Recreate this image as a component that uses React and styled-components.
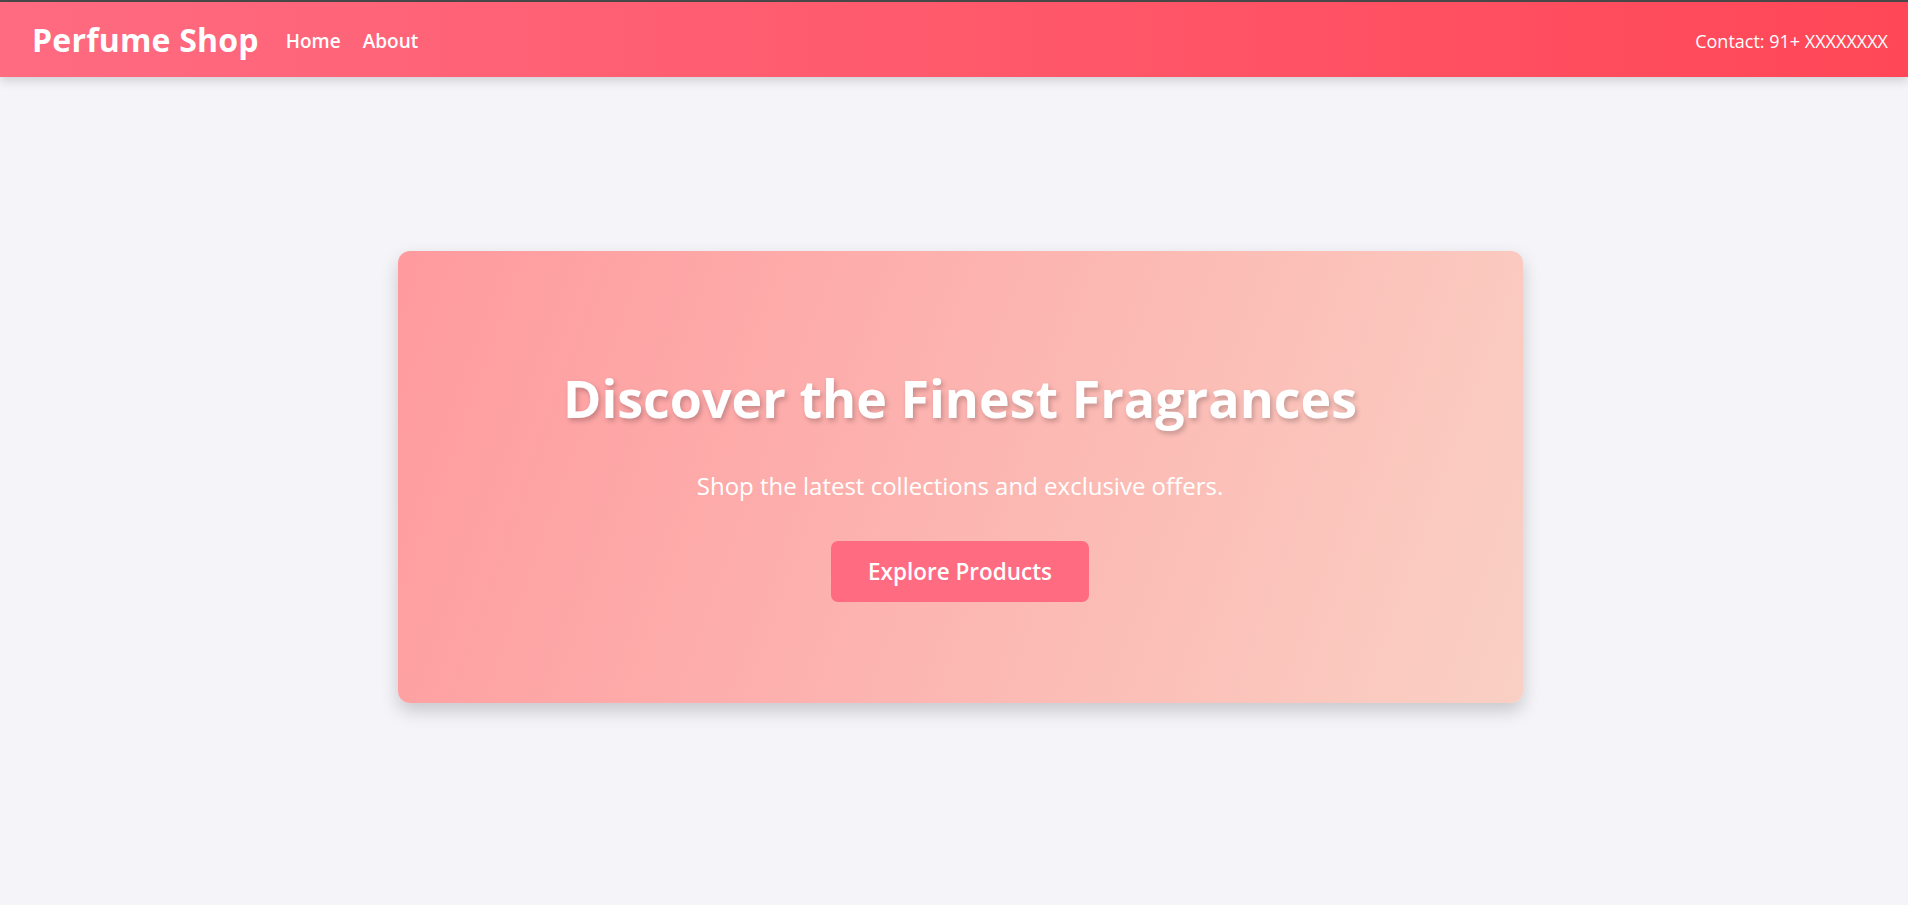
import React from 'react';
import styled, { createGlobalStyle } from 'styled-components';

const GlobalStyle = createGlobalStyle`
  * {
    box-sizing: border-box;
  }

  body {
    margin: 0;
    background: #f4f4f9;
    font-family: "Open Sans", "Noto Sans", sans-serif;
    color: #fff;
  }
`;

const Page = styled.div`
  min-height: 905px;
  border-top: 2px solid #4a4a4a;
`;

const Navbar = styled.nav`
  height: 75px;
  display: flex;
  align-items: center;
  justify-content: space-between;
  padding: 0 20px 0 32px;
  background: linear-gradient(to right, #ff6b81, #ff4757);
  box-shadow: 0 4px 10px rgba(0, 0, 0, 0.15);
`;

const Brand = styled.div`
  display: flex;
  align-items: center;
  gap: 27px;
`;

const Logo = styled.h1`
  margin: 0;
  font-size: 32px;
  font-weight: 700;
  letter-spacing: 0.2px;
`;

const NavLinks = styled.div`
  display: flex;
  gap: 22px;
  margin-top: 2px;
`;

const NavLink = styled.a`
  color: #fff;
  text-decoration: none;
  font-size: 19px;
  font-weight: 600;
  cursor: pointer;
`;

const Contact = styled.span`
  font-size: 18px;
  margin-top: 2px;
`;

const Hero = styled.section`
  display: flex;
  justify-content: center;
  padding: 174px 0 0 12px;
`;

const Card = styled.div`
  width: 1125px;
  height: 452px;
  display: flex;
  flex-direction: column;
  align-items: center;
  padding-top: 116px;
  border-radius: 12px;
  background: linear-gradient(110deg, #ff9a9e 0%, #fad0c4 100%);
  box-shadow: 0 8px 18px rgba(0, 0, 0, 0.18);
  text-align: center;
`;

const Title = styled.h2`
  margin: 0;
  font-size: 52px;
  line-height: 62px;
  font-weight: 700;
  text-shadow: 2px 3px 5px rgba(0, 0, 0, 0.22);
`;

const Subtitle = styled.p`
  margin: 42px 0 0;
  font-size: 24px;
  line-height: 30px;
`;

const Button = styled.button`
  margin-top: 40px;
  width: 258px;
  height: 61px;
  border: none;
  border-radius: 7px;
  background: #ff6b81;
  color: #fff;
  font-family: inherit;
  font-size: 22.5px;
  font-weight: 600;
  cursor: pointer;
`;

const App = () => {
  return (
    <>
      <GlobalStyle />
      <Page>
        <Navbar>
          <Brand>
            <Logo>Perfume Shop</Logo>
            <NavLinks>
              <NavLink>Home</NavLink>
              <NavLink>About</NavLink>
            </NavLinks>
          </Brand>
          <Contact>Contact: 91+ XXXXXXXX</Contact>
        </Navbar>
        <Hero>
          <Card>
            <Title>Discover the Finest Fragrances</Title>
            <Subtitle>Shop the latest collections and exclusive offers.</Subtitle>
            <Button>Explore Products</Button>
          </Card>
        </Hero>
      </Page>
    </>
  );
};

export default App;
